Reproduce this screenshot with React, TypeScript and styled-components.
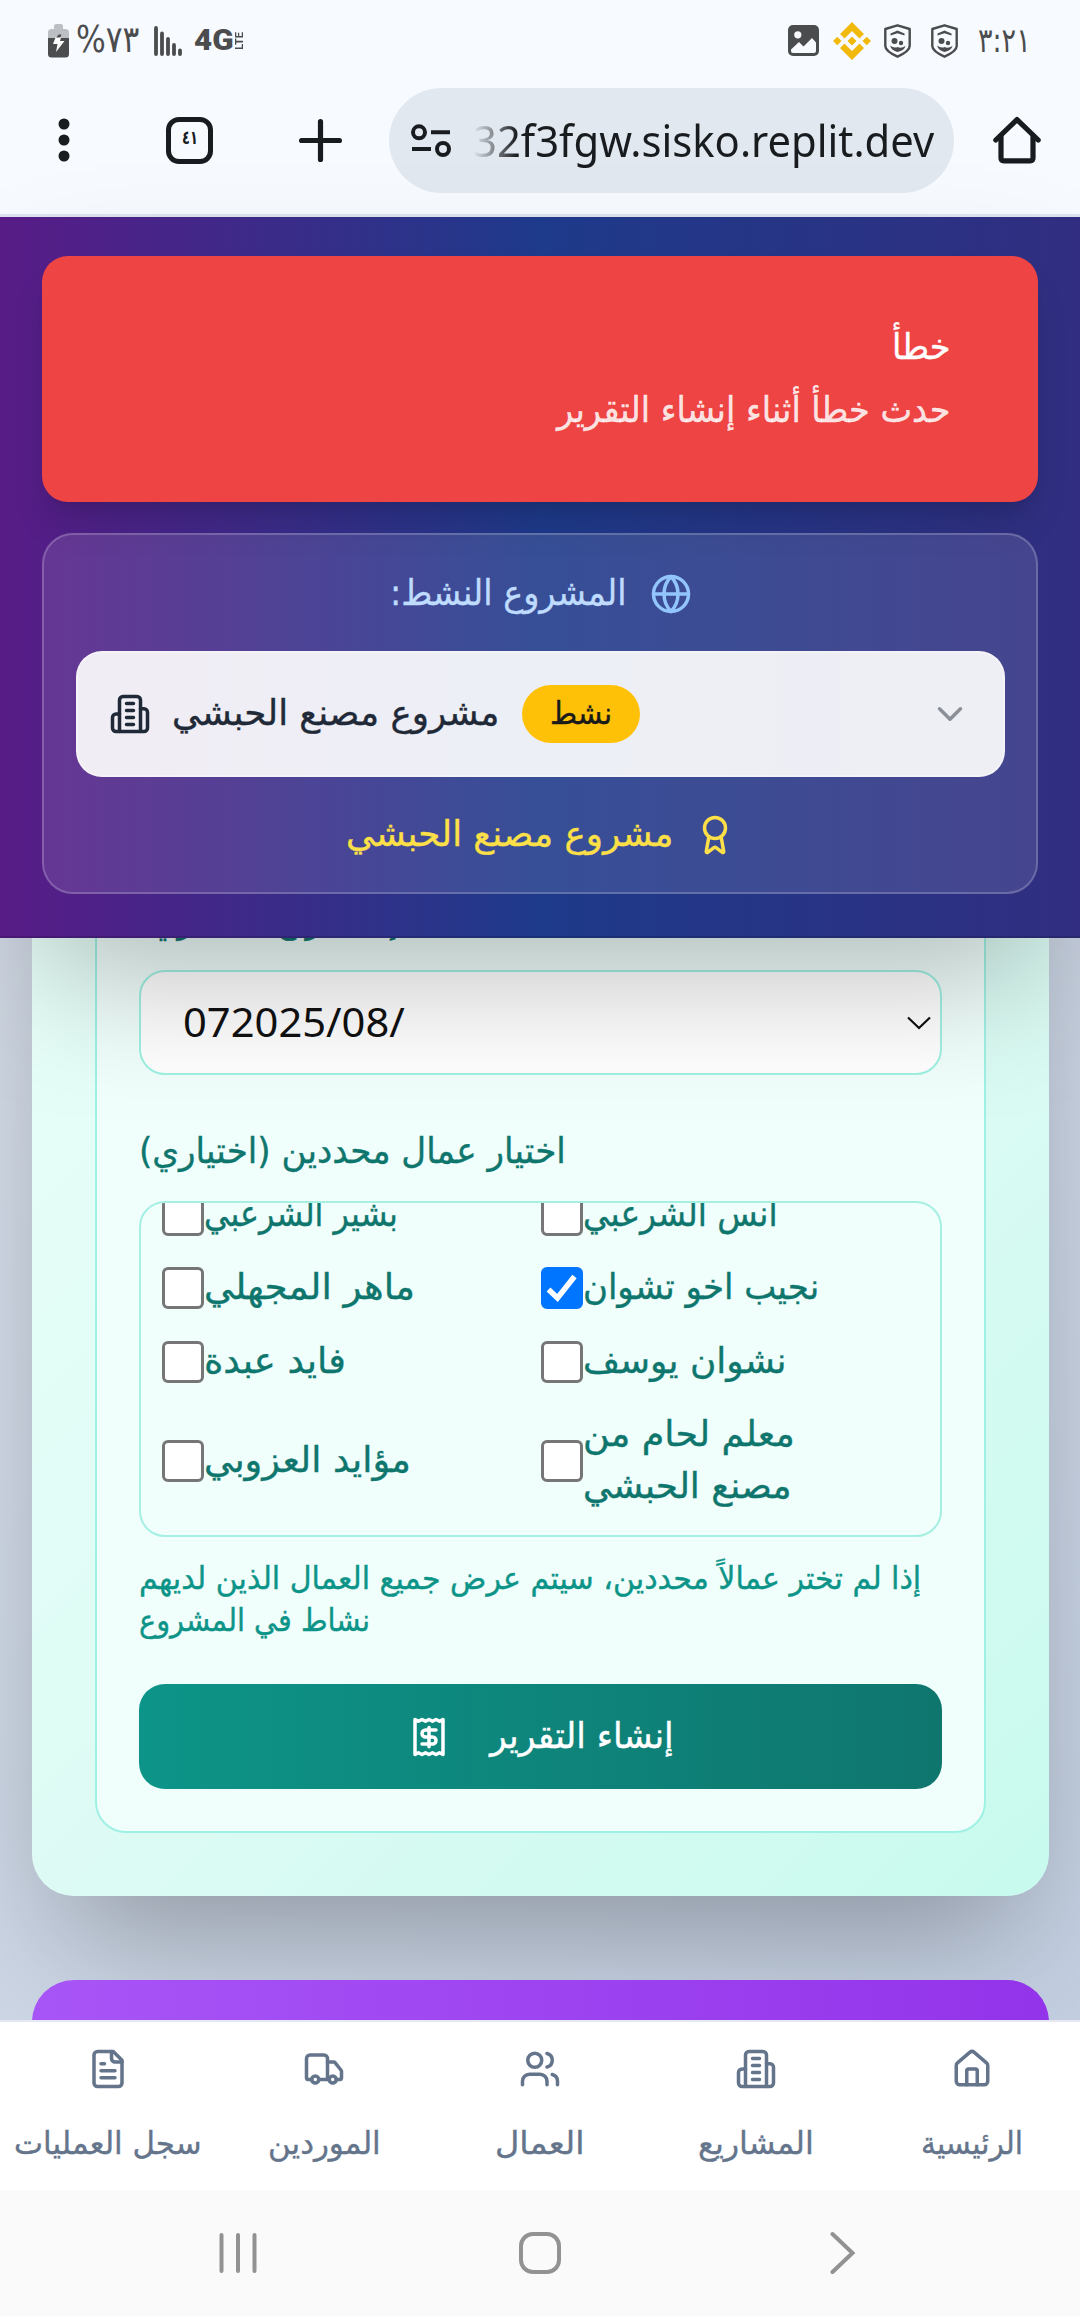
import React, { ReactNode, useLayoutEffect, useRef, useState } from "react";
import styled, { createGlobalStyle, css } from "styled-components";

const arabic = `"DejaVu Sans Condensed", "DejaVu Sans", sans-serif`;
const latin = `"Noto Sans", "Open Sans", sans-serif`;

const GlobalStyle = createGlobalStyle`
  *, *::before, *::after { box-sizing: border-box; }
  body { margin: 0; background: #fff; font-family: ${arabic}; }
  svg { display: block; flex: none; }
`;

/* ---------- fitted text: one line stretched to a known measure ---------- */

const FitBox = styled.span<{ $w: number }>`
  display: flex;
  flex: none;
  width: ${(p) => p.$w}px;
  direction: ltr;
`;
const FitInner = styled.span<{ $firm: boolean }>`
  flex: none;
  white-space: nowrap;
  transform-origin: 0 50%;
  -webkit-text-stroke: ${(p) => (p.$firm ? 0.35 : 0)}px currentColor;
`;

function Fit({ w, ltr, children }: { w: number; ltr?: boolean; children: string }) {
  const ref = useRef<HTMLSpanElement>(null);
  const [scale, setScale] = useState(1);
  useLayoutEffect(() => {
    const measure = () => {
      if (ref.current && ref.current.offsetWidth) setScale(w / ref.current.offsetWidth);
    };
    measure();
    document.fonts?.ready.then(measure);
  }, [w, children]);
  return (
    <FitBox $w={w}>
      <FitInner ref={ref} $firm={!ltr} dir={ltr ? "ltr" : "rtl"} style={{ transform: `translateY(-1px) scaleX(${scale})` }}>
        {children}
      </FitInner>
    </FitBox>
  );
}

/* ---------- icons ---------- */

const Stroke = ({ children, size = 42, color = "currentColor" }: { children: ReactNode; size?: number; color?: string }) => (
  <svg width={size} height={size} viewBox="0 0 24 24" fill="none" stroke={color} strokeWidth={2} strokeLinecap="round" strokeLinejoin="round">
    {children}
  </svg>
);
const BuildingIcon = () => (
  <Stroke>
    <path d="M6 22V4a2 2 0 0 1 2-2h8a2 2 0 0 1 2 2v18Z" />
    <path d="M6 12H4a2 2 0 0 0-2 2v6a2 2 0 0 0 2 2h2" />
    <path d="M18 9h2a2 2 0 0 1 2 2v9a2 2 0 0 1-2 2h-2" />
    <path d="M10 6h4M10 10h4M10 14h4M10 18h4" />
  </Stroke>
);
const GlobeIcon = () => (
  <Stroke color="#93c5fd">
    <circle cx="12" cy="12" r="10" />
    <path d="M12 2a14.5 14.5 0 0 0 0 20 14.5 14.5 0 0 0 0-20" />
    <path d="M2 12h20" />
  </Stroke>
);
const AwardIcon = () => (
  <Stroke>
    <path d="m15.477 12.89 1.515 8.526a.5.5 0 0 1-.81.47l-3.58-2.687a1 1 0 0 0-1.197 0l-3.586 2.686a.5.5 0 0 1-.81-.469l1.514-8.526" />
    <circle cx="12" cy="8" r="6" />
  </Stroke>
);
const ReceiptIcon = () => (
  <Stroke>
    <path d="M4 2v20l2-1 2 1 2-1 2 1 2-1 2 1 2-1 2 1V2l-2 1-2-1-2 1-2-1-2 1-2-1-2 1Z" />
    <path d="M16 8h-6a2 2 0 1 0 0 4h4a2 2 0 1 1 0 4H8" />
    <path d="M12 17.5v-11" />
  </Stroke>
);
const FileIcon = () => (
  <Stroke>
    <path d="M15 2H6a2 2 0 0 0-2 2v16a2 2 0 0 0 2 2h12a2 2 0 0 0 2-2V7Z" />
    <path d="M14 2v4a2 2 0 0 0 2 2h4" />
    <path d="M10 9H8M16 13H8M16 17H8" />
  </Stroke>
);
const TruckIcon = () => (
  <Stroke>
    <path d="M14 18V6a2 2 0 0 0-2-2H4a2 2 0 0 0-2 2v11a1 1 0 0 0 1 1h2" />
    <path d="M15 18H9" />
    <path d="M19 18h2a1 1 0 0 0 1-1v-3.65a1 1 0 0 0-.22-.624l-3.48-4.35A1 1 0 0 0 17.52 8H14" />
    <circle cx="17" cy="18" r="2" />
    <circle cx="7" cy="18" r="2" />
  </Stroke>
);
const UsersIcon = () => (
  <Stroke>
    <path d="M16 21v-2a4 4 0 0 0-4-4H6a4 4 0 0 0-4 4v2" />
    <circle cx="9" cy="7" r="4" />
    <path d="M22 21v-2a4 4 0 0 0-3-3.87" />
    <path d="M16 3.13a4 4 0 0 1 0 7.75" />
  </Stroke>
);
const HouseIcon = () => (
  <Stroke>
    <path d="M15 21v-8a1 1 0 0 0-1-1h-4a1 1 0 0 0-1 1v8" />
    <path d="M3 10a2 2 0 0 1 .709-1.528l7-5.999a2 2 0 0 1 2.582 0l7 5.999A2 2 0 0 1 21 10v9a2 2 0 0 1-2 2H5a2 2 0 0 1-2-2z" />
  </Stroke>
);
const BatteryIcon = () => (
  <svg width="21" height="34" viewBox="0 0 21 34">
    <path d="M6 5V2.2Q6 0 8.200 0h4.600Q15 0 15 2.200V5h2.500Q21 5 21 8.500V14H0V8.500Q0 5 3.500 5Z" fill="#bcbfc4" />
    <path d="M0 14h21v16q0 3.500-3.500 3.500h-14Q0 33.500 0 30Z" fill="#4b4c4e" />
    <path d="M8 14l2.500-3.500h3L12 14Z" fill="#4b4c4e" />
    <path d="M7.500 13.500 5 20h4.500L8 28l8.500-11H12l1-3.500Z" fill="#fff" />
  </svg>
);
const SignalIcon = () => (
  <svg width="28" height="30" viewBox="0 0 28 30" stroke="#4b4c4e" strokeWidth="3.800" strokeLinecap="round">
    <path d="M2 2v26M8 7.500v20.500M14 13v15M20 19v9M26 24.500v3.500" />
  </svg>
);
const PictureIcon = () => (
  <svg width="31" height="31" viewBox="0 0 31 31">
    <rect width="31" height="31" rx="5" fill="#4b4c4e" />
    <circle cx="9.800" cy="9.800" r="3.600" fill="#f7faff" />
    <path d="M3 24.500 11 17l4.500 4.500L24 13l4 4.500V26q0 2-2 2H5q-2 0-2-2Z" fill="#f7faff" />
  </svg>
);
const BinanceIcon = () => (
  <svg width="38" height="38" viewBox="0 0 38 38" fill="#f0b90b">
    <path d="M19 0 31 12l-4.500 4.500L19 9l-7.500 7.500L7 12ZM19 38 7 26l4.500-4.500L19 29l7.500-7.500L31 26ZM19 14.500l4.500 4.500-4.500 4.500-4.500-4.500ZM4.300 14.800 8.500 19l-4.200 4.200L0 19ZM33.700 14.800 38 19l-4.300 4.200L29.500 19Z" />
  </svg>
);
const ShieldIcon = () => (
  <svg width="27" height="34" viewBox="0 0 27 34">
    <path d="M13.500 1.300 25.700 5v17q0 5-12.200 10.700Q1.300 27 1.300 22V5Z" fill="none" stroke="#4b4c4e" strokeWidth="2.400" strokeLinejoin="round" />
    <path d="M6.500 11.500V9.500l7-3 7 3v2l-7-2.300Z" fill="#4b4c4e" />
    <circle cx="10.500" cy="17" r="3" fill="#4b4c4e" />
    <circle cx="17" cy="19" r="2.200" fill="#4b4c4e" />
    <path d="M6 21.500q4 3 7.500 1.500 3.500 2 8-1-1 4.500-8 6-6-1.500-7.500-6.500Z" fill="#4b4c4e" />
  </svg>
);
const PlusIcon = () => (
  <svg width="43" height="43" viewBox="0 0 43 43" stroke="#191c1f" strokeWidth="5.200" strokeLinecap="round">
    <path d="M21.500 2.600v37.800M2.600 21.500h37.800" />
  </svg>
);
const DotsIcon = () => (
  <svg width="12" height="44" viewBox="0 0 12 44" fill="#191c1f">
    <circle cx="6" cy="6" r="5.500" />
    <circle cx="6" cy="22" r="5.500" />
    <circle cx="6" cy="38" r="5.500" />
  </svg>
);
const TuneIcon = () => (
  <svg width="40" height="34" viewBox="0 0 40 34" fill="none" stroke="#191c1f" strokeWidth="4">
    <circle cx="8" cy="8.300" r="6" />
    <path d="M20 8.300h19M1 25h19" />
    <circle cx="32" cy="25" r="6" />
  </svg>
);
const BrowserHomeIcon = () => (
  <svg width="48" height="48" viewBox="0 0 48 48" fill="none" stroke="#191c1f" strokeWidth="5.200" strokeLinecap="round" strokeLinejoin="round">
    <path d="M2.800 24 24 3.500 45.200 24" />
    <path d="M8 20v22q0 2.800 2.800 2.800h26.400q2.800 0 2.800-2.800V20" />
  </svg>
);

/* ---------- browser chrome ---------- */

const Screen = styled.div`
  width: 1080px;
  height: 2316px;
  display: flex;
  flex-direction: column;
  overflow: hidden;
`;
const StatusBar = styled.div`
  height: 81px;
  flex: none;
  display: flex;
  align-items: center;
  justify-content: space-between;
  padding: 0 49px 0 48px;
  background: #f7faff;
  color: #4b4c4e;
`;
const StatusGroup = styled.div<{ $gap?: number }>`
  display: flex;
  align-items: center;
  gap: ${(p) => p.$gap ?? 0}px;
`;
const Percent = styled.div`
  margin-left: 7px;
  margin-right: 15px;
  font-size: 37px;
  line-height: 40px;
`;
const Clock = styled.div`
  font-size: 34px;
  line-height: 40px;
`;
const Network = styled.div`
  display: flex;
  align-items: center;
  margin-left: 12px;
  font: 900 29px/28px Roboto, sans-serif;
`;
const Lte = styled.span`
  writing-mode: vertical-rl;
  transform: rotate(180deg);
  font: 700 11px/11px Roboto, sans-serif;
`;
const Toolbar = styled.div`
  height: 136px;
  flex: none;
  display: flex;
  align-items: flex-start;
  padding-left: 57.5px;
  background: #f7faff;
  border-bottom: 3px solid #dfe5ef;
`;
const Tool = styled.div<{ $ml?: number }>`
  height: 118px;
  margin-left: ${(p) => p.$ml ?? 0}px;
  display: flex;
  align-items: center;
`;
const TabCount = styled.div`
  width: 47px;
  height: 47px;
  border: 5.500px solid #191c1f;
  border-radius: 13px;
  display: flex;
  align-items: center;
  justify-content: center;
  color: #191c1f;
  font-weight: 700;
  font-size: 19px;
  line-height: 20px;
  padding-bottom: 4px;
`;
const AddressBar = styled.div`
  width: 565px;
  height: 105px;
  margin: 7px 0 0 47px;
  padding-left: 22px;
  display: flex;
  align-items: center;
  gap: 22px;
  background: #e2e8f0;
  border-radius: 53px;
`;
const Url = styled.div`
  font: 400 44.500px/60px ${latin};
  color: #191c1f;
  -webkit-mask-image: linear-gradient(to right, transparent, #000 44px);
  mask-image: linear-gradient(to right, transparent, #000 44px);
`;

/* ---------- page header ---------- */

const Header = styled.header`
  height: 721px;
  flex: none;
  position: relative;
  z-index: 2;
  padding: 39px 42px 0;
  background: linear-gradient(to right, #581c87, #1e3a8a 50%, #312e81);
  border-bottom: 2px solid rgba(0, 0, 0, 0.15);
  box-shadow: 0 66px 131px -31px rgba(0, 0, 0, 0.27);
`;
const Toast = styled.div`
  height: 246px;
  padding: 66px 87px 0 0;
  display: flex;
  flex-direction: column;
  align-items: flex-end;
  gap: 11px;
  border-radius: 26px;
  background: #ef4444;
  box-shadow: 0 26px 39px -8px rgba(0, 0, 0, 0.14), 0 10px 16px -10px rgba(0, 0, 0, 0.12);
`;
const ToastLine = styled.div<{ $soft?: boolean }>`
  font-size: 35.500px;
  line-height: 52px;
  color: ${(p) => (p.$soft ? "rgba(255,255,255,.86)" : "#fff")};
`;
const Panel = styled.section`
  height: 361px;
  margin-top: 31px;
  padding: 32px 31px 32px 32px;
  display: flex;
  flex-direction: column;
  gap: 31px;
  border: 2px solid rgba(255, 255, 255, 0.2);
  border-radius: 31px;
  background: rgba(255, 255, 255, 0.11);
`;
const PanelLine = styled.div<{ $color: string; $gap: number }>`
  height: 53px;
  flex: none;
  display: flex;
  align-items: center;
  justify-content: center;
  gap: ${(p) => p.$gap}px;
  font-size: 35.500px;
  line-height: 52px;
  color: ${(p) => p.$color};
`;
const Select = styled.div`
  height: 126px;
  flex: none;
  padding: 0 32px 0 31px;
  display: flex;
  align-items: center;
  border: 2px solid rgba(255, 255, 255, 0.3);
  border-radius: 26px;
  background: rgba(255, 255, 255, 0.91);
  color: #1f2937;
  font-size: 35.500px;
  line-height: 52px;
  & > :nth-child(2) { margin-left: 21px; }
`;
const Badge = styled.span`
  width: 118px;
  height: 58px;
  margin: 0 auto 0 23px;
  display: flex;
  align-items: center;
  justify-content: center;
  border-radius: 29px;
  background: #ffc107;
  color: #1a1a1a;
  font-size: 31px;
  line-height: 50px;
`;

/* ---------- page content ---------- */

const Content = styled.main`
  height: 1082px;
  flex: none;
  overflow: hidden;
  padding: 0 31px 0 32px;
  background: linear-gradient(135deg, #d5dde9, #c3cfe1);
`;
const Card = styled.section`
  height: 1018px;
  margin-top: -60px;
  padding: 0 63px;
  border-radius: 42px;
  background: linear-gradient(135deg, #e9fffa, #ddfbf4 50%, #c8faee);
  box-shadow: 0 66px 131px -31px rgba(0, 0, 0, 0.3);
`;
const FormPanel = styled.div`
  height: 955px;
  padding: 15px 42px 42px;
  border: 2px solid #9ff1e3;
  border-radius: 31px;
  background: #f0fefc;
`;
const Label = styled.div`
  height: 52px;
  font-size: 35.500px;
  line-height: 52px;
  color: #0f766e;
`;
const DateInput = styled.div`
  height: 105px;
  margin: 23px 0 51px;
  padding: 0 9px 0 41.500px;
  display: flex;
  align-items: center;
  justify-content: space-between;
  border: 2px solid #9ff1e3;
  border-radius: 26px;
  background: #fff;
  font: 400 40px/60px ${latin};
  color: #111;
`;
const WorkerBox = styled.div`
  height: 336px;
  margin-top: 23px;
  padding: 0 21px;
  overflow: hidden;
  border: 2px solid #a5efe3;
  border-radius: 26px;
`;
const WorkerGrid = styled.div`
  margin-top: -14px;
  display: grid;
  grid-template-columns: 1fr 1fr;
  row-gap: 21px;
`;
const Worker = styled.label`
  min-height: 52.300px;
  display: flex;
  align-items: center;
  font-size: 35.500px;
  line-height: 52.300px;
  color: #0f766e;
`;
const Check = styled.span<{ $on?: boolean }>`
  width: 42px;
  height: 42px;
  flex: none;
  display: flex;
  align-items: center;
  justify-content: center;
  border: 3px solid #767676;
  border-radius: 6px;
  background: #fff;
  ${(p) =>
    p.$on &&
    css`
      border-color: #0075ff;
      background: #0075ff;
    `}
`;
const Help = styled.p`
  margin: 21px 0 42px;
  font-size: 31px;
  line-height: 42px;
  color: #0d9488;
`;
const Submit = styled.button`
  width: 100%;
  height: 105px;
  padding: 0;
  display: flex;
  align-items: center;
  justify-content: center;
  gap: 40px;
  border: 0;
  border-radius: 26px;
  background: linear-gradient(to right, #0d9488, #0f766e);
  color: #fff;
  font-family: ${arabic};
  font-size: 35.500px;
  line-height: 52px;
`;
const NextCard = styled.section`
  height: 200px;
  margin-top: 84px;
  border-radius: 42px;
  background: linear-gradient(to right, #a855f7, #9333ea);
`;

/* ---------- bottom bars ---------- */

const TabBar = styled.nav`
  height: 170px;
  flex: none;
  display: grid;
  grid-template-columns: repeat(5, 1fr);
  background: #fff;
  border-top: 2px solid #e6e9f2;
`;
const Tab = styled.a`
  display: flex;
  flex-direction: column;
  align-items: center;
  padding-top: 26px;
  gap: 33px;
  color: #64748b;
  font-size: 31px;
  line-height: 42px;
`;
const SystemBar = styled.div`
  height: 126px;
  flex: none;
  display: grid;
  grid-template-columns: 302px 311px 26px;
  align-items: center;
  padding-left: 217px;
  background: #fafafa;
`;

const workers: { name: { t: string; w: number }[]; on?: boolean }[] = [
  { name: [{ t: "بشير الشرعبي", w: 194 }] },
  { name: [{ t: "انس الشرعبي", w: 195 }] },
  { name: [{ t: "ماهر المجهلي", w: 211 }] },
  { name: [{ t: "نجيب اخو تشوان", w: 236 }], on: true },
  { name: [{ t: "فايد عبدة", w: 142 }] },
  { name: [{ t: "نشوان يوسف", w: 204 }] },
  { name: [{ t: "مؤايد العزوبي", w: 207 }] },
  { name: [{ t: "معلم لحام من", w: 212 }, { t: "مصنع الحبشي", w: 209 }] },
];

const tabs: { label: string; w: number; icon: ReactNode }[] = [
  { label: "سجل العمليات", w: 188, icon: <FileIcon /> },
  { label: "الموردين", w: 113, icon: <TruckIcon /> },
  { label: "العمال", w: 90, icon: <UsersIcon /> },
  { label: "المشاريع", w: 116, icon: <BuildingIcon /> },
  { label: "الرئيسية", w: 102, icon: <HouseIcon /> },
];

export default function App() {
  return (
    <Screen>
      <GlobalStyle />
      <StatusBar>
        <StatusGroup>
          <BatteryIcon />
          <Percent><Fit w={63} ltr>%٧٣</Fit></Percent>
          <SignalIcon />
          <Network>
            <Fit w={40} ltr>4G</Fit>
            <Lte>LTE</Lte>
          </Network>
        </StatusGroup>
        <StatusGroup $gap={20}>
          <StatusGroup $gap={13.5}>
            <PictureIcon />
            <BinanceIcon />
            <ShieldIcon />
          </StatusGroup>
          <ShieldIcon />
          <Clock><Fit w={53} ltr>٣:٢١</Fit></Clock>
        </StatusGroup>
      </StatusBar>
      <Toolbar>
        <Tool><DotsIcon /></Tool>
        <Tool $ml={96.5}><TabCount><Fit w={16} ltr>٤١</Fit></TabCount></Tool>
        <Tool $ml={85.5}><PlusIcon /></Tool>
        <AddressBar>
          <TuneIcon />
          <Url><Fit w={461} ltr>32f3fgw.sisko.replit.dev</Fit></Url>
        </AddressBar>
        <Tool $ml={39.5}><BrowserHomeIcon /></Tool>
      </Toolbar>

      <Header>
        <Toast>
          <ToastLine><Fit w={59}>خطأ</Fit></ToastLine>
          <ToastLine $soft><Fit w={394}>حدث خطأ أثناء إنشاء التقرير</Fit></ToastLine>
        </Toast>
        <Panel>
          <PanelLine $color="#bfdbfe" $gap={23}>
            <Fit w={237}>المشروع النشط:</Fit>
            <GlobeIcon />
          </PanelLine>
          <Select>
            <BuildingIcon />
            <Fit w={327}>مشروع مصنع الحبشي</Fit>
            <Badge><Fit w={62}>نشط</Fit></Badge>
            <Stroke color="#8a8f98"><path d="m6 9 6 6 6-6" /></Stroke>
          </Select>
          <PanelLine $color="#fde047" $gap={21}>
            <Fit w={327}>مشروع مصنع الحبشي</Fit>
            <AwardIcon />
          </PanelLine>
        </Panel>
      </Header>

      <Content>
        <Card>
          <FormPanel>
            <Label><Fit w={258}>إلى تاريخ (اختياري)</Fit></Label>
            <DateInput>
              <Fit w={222} ltr>072025/08/</Fit>
              <svg width="24" height="14" viewBox="0 0 24 14" fill="none" stroke="#111" strokeWidth="2.200">
                <path d="m1 1.500 11 10.500L23 1.500" />
              </svg>
            </DateInput>
            <Label><Fit w={427}>اختيار عمال محددين (اختياري)</Fit></Label>
            <WorkerBox>
              <WorkerGrid>
                {workers.map((worker) => (
                  <Worker key={worker.name[0].t}>
                    <Check $on={worker.on}>
                      {worker.on && (
                        <svg width="34" height="34" viewBox="0 0 34 34" fill="none" stroke="#fff" strokeWidth="5.500">
                          <path d="M3.500 18.500 12.500 27 29.500 5.500" />
                        </svg>
                      )}
                    </Check>
                    <span>
                      {worker.name.map((line) => (
                        <Fit key={line.t} w={line.w}>{line.t}</Fit>
                      ))}
                    </span>
                  </Worker>
                ))}
              </WorkerGrid>
            </WorkerBox>
            <Help>
              <Fit w={782}>إذا لم تختر عمالاً محددين، سيتم عرض جميع العمال الذين لديهم</Fit>
              <Fit w={231}>نشاط في المشروع</Fit>
            </Help>
            <Submit>
              <ReceiptIcon />
              <Fit w={184}>إنشاء التقرير</Fit>
            </Submit>
          </FormPanel>
        </Card>
        <NextCard />
      </Content>

      <TabBar>
        {tabs.map((tab) => (
          <Tab key={tab.label}>
            {tab.icon}
            <Fit w={tab.w}>{tab.label}</Fit>
          </Tab>
        ))}
      </TabBar>
      <SystemBar>
        <svg width="42" height="42" viewBox="0 0 42 42" stroke="#929292" strokeWidth="4" strokeLinecap="round">
          <path d="M4.500 3v36M21 3v36M37.500 3v36" />
        </svg>
        <svg width="42" height="42" viewBox="0 0 42 42" fill="none" stroke="#929292" strokeWidth="4">
          <rect x="2" y="2" width="38" height="38" rx="12" />
        </svg>
        <svg width="26" height="44" viewBox="0 0 26 44" fill="none" stroke="#929292" strokeWidth="4" strokeLinecap="round">
          <path d="M2.500 3 22.500 22 2.500 41" />
        </svg>
      </SystemBar>
    </Screen>
  );
}
